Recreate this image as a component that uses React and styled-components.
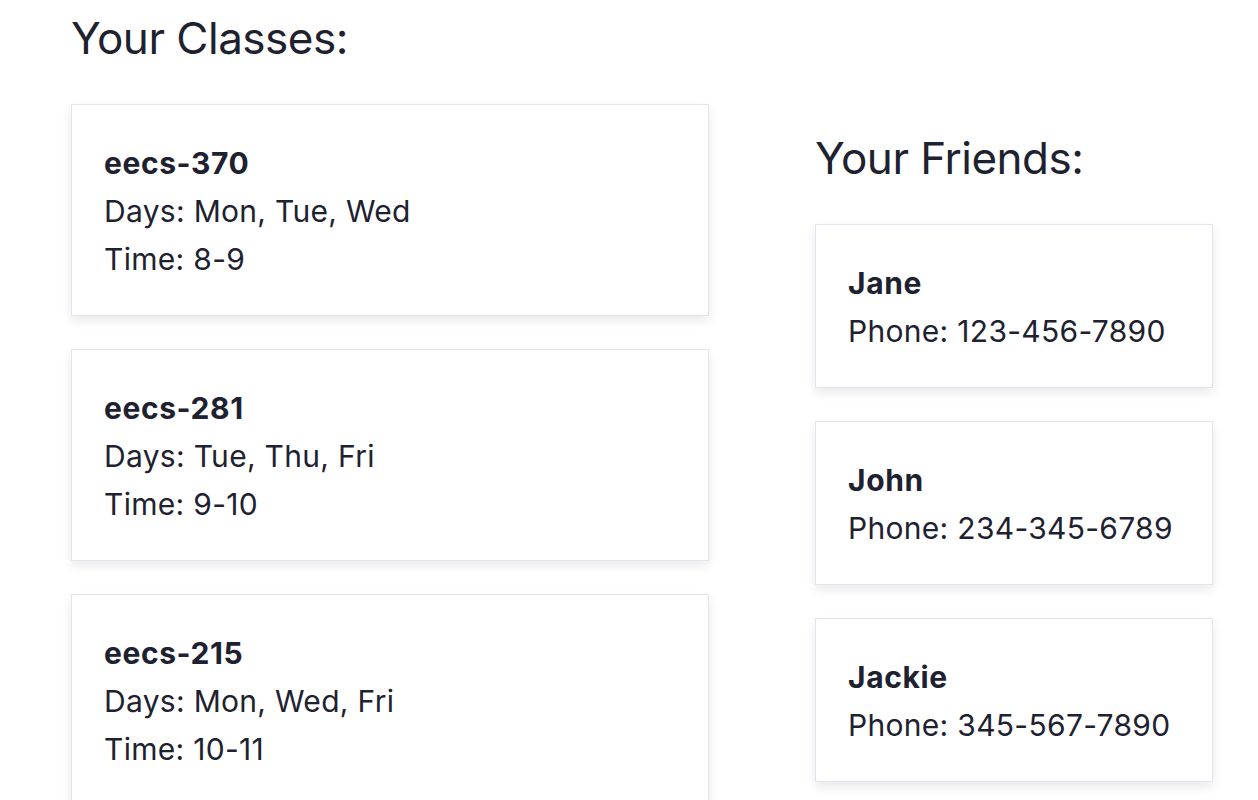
import React from 'react';
import styled, { createGlobalStyle } from 'styled-components';

const GlobalStyle = createGlobalStyle`
  body {
    margin: 0;
    background: #ffffff;
    font-family: Inter, "Noto Sans", sans-serif;
    color: #1e2230;
  }
`;

const Page = styled.main`
  display: grid;
  grid-template-columns: 638px 398px;
  column-gap: 106px;
  padding: 0 45px 0 71px;
  align-items: start;
`;

const Column = styled.section`
  display: flex;
  flex-direction: column;
  padding-top: ${(p) => p.$offset || 0}px;
`;

const Heading = styled.h2`
  margin: 12px 0 40px;
  font-size: 44px;
  line-height: 52px;
  font-weight: 400;
  letter-spacing: -0.5px;
`;

const Card = styled.div`
  border: 1px solid #e1e5ed;
  background: #fff;
  padding: 34px 32px 32px;
  margin-bottom: 33px;
  box-shadow: 0 5px 10px rgba(20, 25, 40, 0.09);
`;

const Line = styled.div`
  font-size: 30px;
  line-height: 48px;
  letter-spacing: ${(p) => (p.$bold ? '0.6px' : '0.3px')};
  font-weight: ${(p) => (p.$bold ? 700 : 400)};
`;

const classes = [
  { name: 'eecs-370', days: 'Mon, Tue, Wed', time: '8-9' },
  { name: 'eecs-281', days: 'Tue, Thu, Fri', time: '9-10' },
  { name: 'eecs-215', days: 'Mon, Wed, Fri', time: '10-11' },
];

const friends = [
  { name: 'Jane', phone: '123-456-7890' },
  { name: 'John', phone: '234-345-6789' },
  { name: 'Jackie', phone: '345-567-7890' },
];

const App = () => (
  <>
    <GlobalStyle />
    <Page>
      <Column>
        <Heading>Your Classes:</Heading>
        {classes.map((c) => (
          <Card key={c.name}>
            <Line $bold>{c.name}</Line>
            <Line>Days: {c.days}</Line>
            <Line>Time: {c.time}</Line>
          </Card>
        ))}
      </Column>
      <Column $offset={120}>
        <Heading>Your Friends:</Heading>
        {friends.map((f) => (
          <Card key={f.name}>
            <Line $bold>{f.name}</Line>
            <Line>Phone: {f.phone}</Line>
          </Card>
        ))}
      </Column>
    </Page>
  </>
);

export default App;
